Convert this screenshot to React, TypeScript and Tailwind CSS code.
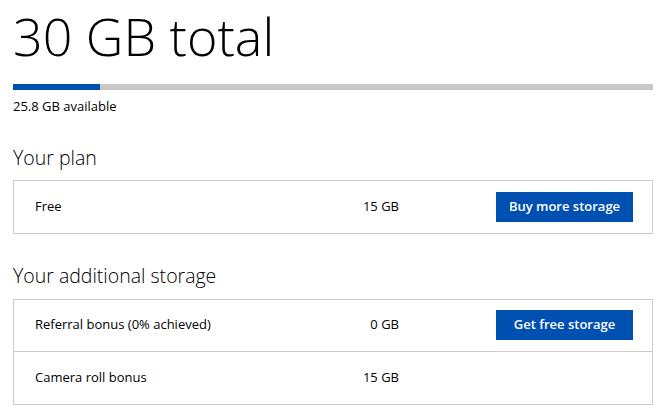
const font = { fontFamily: '"Open Sans", "Noto Sans", sans-serif' }

type Row = { label: string; value: string; action?: string }

function StorageRow({ label, value, action }: Row) {
  return (
    <div className="flex h-[52px] items-center pl-[21px] pr-[19px] text-[13px] text-black">
      <span className="flex-1">{label}</span>
      <span className="mr-[97px] w-[100px] text-right">{value}</span>
      <div className="w-[137px]">
        {action && (
          <button className="h-[30px] w-[137px] bg-[#0050b1] text-[13px] font-semibold text-white">
            {action}
          </button>
        )}
      </div>
    </div>
  )
}

function Section({ title, rows }: { title: string; rows: Row[] }) {
  return (
    <div>
      <h2 className="text-[19.5px] font-light leading-none text-black">{title}</h2>
      <div className="mt-[13px] divide-y divide-[#cccccc] border border-[#cccccc]">
        {rows.map((r) => (
          <StorageRow key={r.label} {...r} />
        ))}
      </div>
    </div>
  )
}

export default function App() {
  const fill = 13.6
  return (
    <div className="min-h-screen bg-white pl-[13px] pr-[15px]" style={font}>
      <h1 className="pt-[4px] text-[52px] font-light leading-[64px] text-black">30 GB total</h1>
      <div className="mt-[16px] h-[6px] w-full bg-[#c8c8c8]">
        <div className="h-full bg-[#0050b1]" style={{ width: `${fill}%` }} />
      </div>
      <p className="mt-[7px] text-[13px] text-black">25.8 GB available</p>
      <div className="mt-[31px]">
        <Section title="Your plan" rows={[{ label: "Free", value: "15 GB", action: "Buy more storage" }]} />
      </div>
      <div className="mt-[32px]">
        <Section
          title="Your additional storage"
          rows={[
            { label: "Referral bonus (0% achieved)", value: "0 GB", action: "Get free storage" },
            { label: "Camera roll bonus", value: "15 GB" },
          ]}
        />
      </div>
    </div>
  )
}
